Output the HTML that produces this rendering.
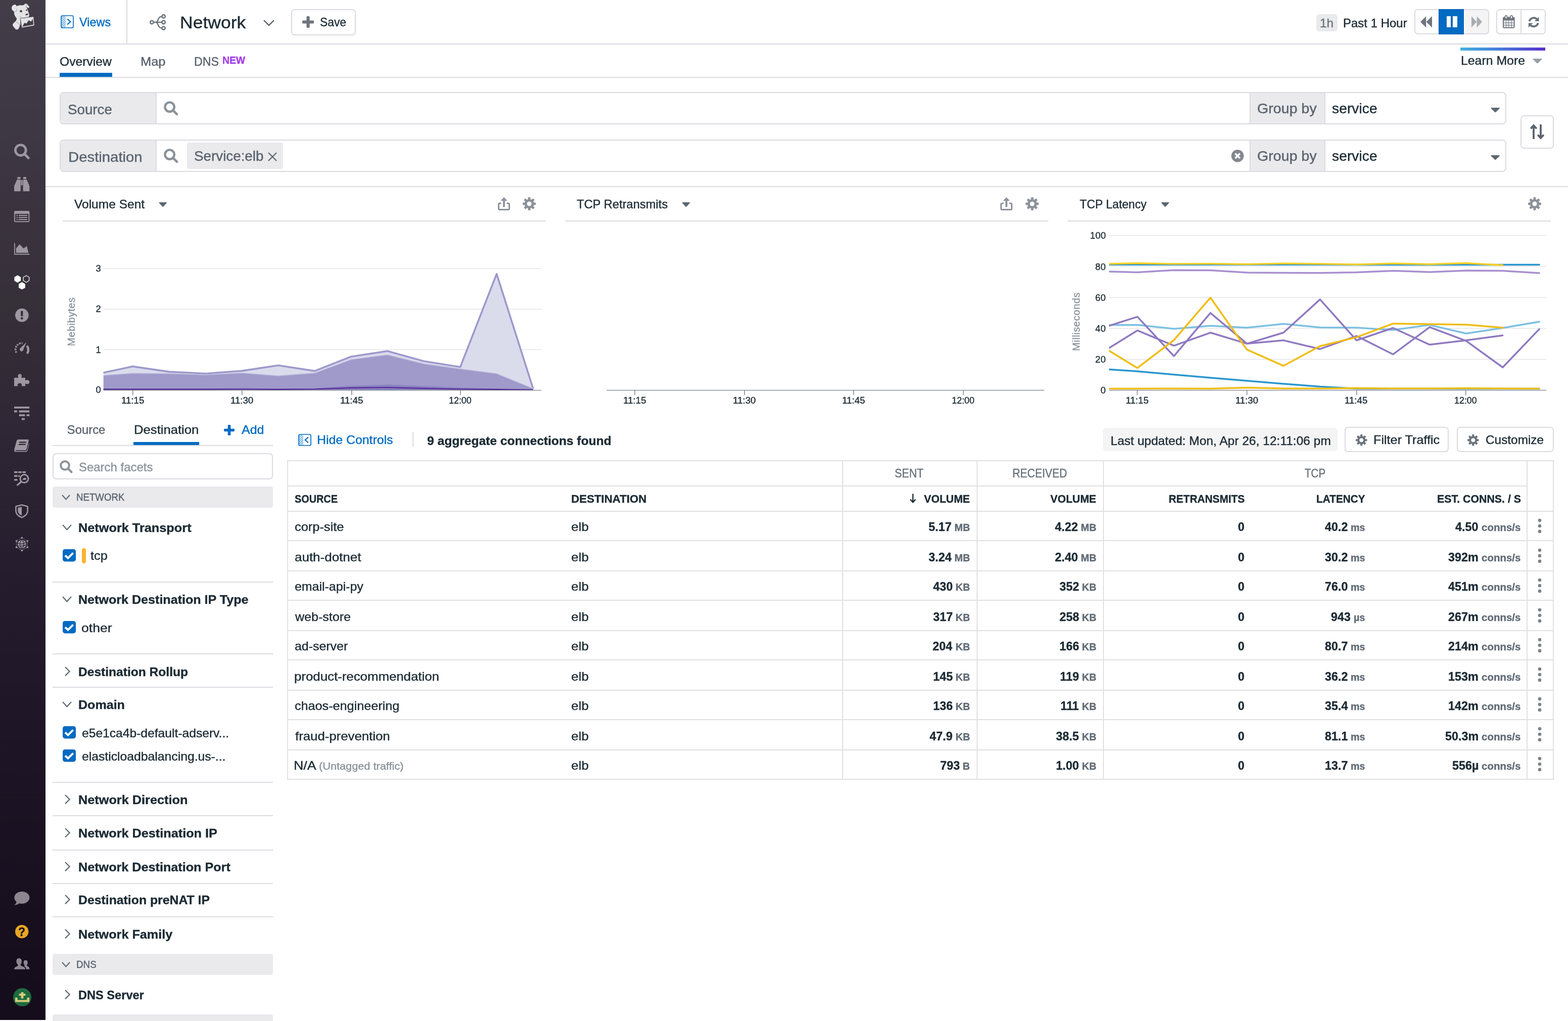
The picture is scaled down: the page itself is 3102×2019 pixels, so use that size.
<!DOCTYPE html>
<html lang="en"><head><meta charset="utf-8"><title>Network | Datadog</title>
<style>
*{box-sizing:border-box;margin:0;padding:0}
html,body{width:3102px;height:2019px;overflow:hidden;background:#fff}
body{position:relative;will-change:transform;font-family:"Liberation Sans",sans-serif;color:#1c2b34;font-size:23.8px;line-height:1;-webkit-font-smoothing:antialiased}
.t{position:absolute;white-space:nowrap;line-height:1;display:block;transform-origin:0 0;-webkit-text-stroke:0.4px currentColor}
.abs{position:absolute}
svg{display:block;overflow:visible}
</style></head>
<body>
<nav aria-label="Main navigation">
<div style="position:absolute;left:0px;top:0px;width:90px;height:2017.4px;background:linear-gradient(180deg,#433d49 0px,#3d3643 300px,#363039 600px,#2d2534 900px,#251d2d 1150px,#1d1525 1500px,#160e1d 1900px,#150c1c 2019px)"></div>
<svg style="position:absolute;left:0px;top:0px;" width="90" height="66" viewBox="0 0 2112 1549"><path fill="#e3e3e5" d="M540 390 C530 300 600 215 690 212 C740 215 760 260 775 290 C830 260 900 235 960 240 C1010 250 1060 245 1110 235 C1140 190 1180 160 1215 165 C1280 200 1340 280 1360 345 C1340 375 1310 370 1280 350 L1235 330 C1270 420 1300 520 1330 600 C1360 650 1370 720 1340 770 C1320 800 1280 810 1250 815 C1200 850 1150 870 1100 870 L960 850 L940 850 L950 1170 L915 1175 C910 1260 880 1340 800 1375 C740 1380 700 1340 670 1290 C620 1240 580 1200 590 1140 C600 1090 660 1040 720 990 C760 950 780 900 770 840 C700 770 660 690 655 600 C650 570 655 560 660 545 C590 510 545 450 540 390Z"/><path fill="#e3e3e5" stroke="#423c48" stroke-width="14" stroke-linejoin="miter" d="M945 852 L1558 772 L1596 1188 L1012 1288Z"/><path fill="#423c48" d="M1040 1236 L1132 1060 L1228 1094 L1332 940 L1442 1004 L1520 872 L1552 1142Z"/><ellipse cx="975" cy="520" rx="56" ry="52" fill="#423c48"/><ellipse cx="1225" cy="468" rx="30" ry="42" fill="#423c48" transform="rotate(-12 1225 468)"/><ellipse cx="1246" cy="670" rx="68" ry="38" fill="#423c48" transform="rotate(-14 1246 670)"/><path d="M920 758 C1000 840 1150 885 1262 768" fill="none" stroke="#423c48" stroke-width="13"/><path d="M690 548 C745 545 785 500 775 420" fill="none" stroke="#423c48" stroke-width="11"/><path d="M745 1040 C830 1030 890 1100 915 1175" fill="none" stroke="#423c48" stroke-width="11"/><path d="M1205 195 L1240 330 M1170 305 L1240 345" fill="none" stroke="#423c48" stroke-width="9"/></svg>
<svg style="position:absolute;left:27.8px;top:283.6px;" width="30.4" height="30.4" viewBox="0 0 30.4 30.4"><circle cx="12.8" cy="13" r="10.4" fill="none" stroke="#9c97a1" stroke-width="4.8"/><path d="M20.4 20.6 L28.2 28.2" stroke="#9c97a1" stroke-width="5" stroke-linecap="round"/></svg>
<svg style="position:absolute;left:27.8px;top:349.5px;" width="30.4" height="28.4" viewBox="0 0 30.4 28.4"><path fill="#9c97a1" d="M6.4 0 H12.4 V4 H6.4Z M18 0 H24 V4 H18Z M5.6 5.2 H12.8 V28.2 H0 V20 Q0 18 0.6 16.4Z M17.6 5.2 H24.8 L29.8 16.4 Q30.4 18 30.4 20 V28.2 H17.6Z M13.6 6 H16.8 V16.4 H13.6Z"/></svg>
<svg style="position:absolute;left:27.8px;top:416.8px;" width="30.4" height="22.4" viewBox="0 0 30.4 22.4"><path fill="#9c97a1" fill-rule="evenodd" d="M2.4 0 H28 Q30.4 0 30.4 2.4 V19.8 Q30.4 22.2 28 22.2 H2.4 Q0 22.2 0 19.8 V2.4 Q0 0 2.4 0Z M2 6 V20.2 H28.4 V6Z M4.6 8 H7 V10 H4.6Z M8.8 8 H26 V10 H8.8Z M4.6 12 H7 V14 H4.6Z M8.8 12 H26 V14 H8.8Z M4.6 16 H7 V18 H4.6Z M8.8 16 H26 V18 H8.8Z"/></svg>
<svg style="position:absolute;left:27.8px;top:481.2px;" width="30.4" height="23" viewBox="0 0 30.4 23"><path fill="#9c97a1" d="M0 0 H1.8 V20.8 H30.4 V22.8 H0Z M3.8 10.2 L10.8 2 L18.6 10.2 L25 5.4 L28.4 19 H3.8Z"/></svg>
<svg style="position:absolute;left:27.8px;top:543.6px;" width="30.4" height="29" viewBox="0 0 30.4 29"><polygon points="6.80,0.20 13.21,3.90 13.21,11.30 6.80,15.00 0.39,11.30 0.39,3.90" fill="#fff"/><polygon points="23.90,1.00 29.62,4.30 29.62,10.90 23.90,14.20 18.18,10.90 18.18,4.30" fill="none" stroke="#fff" stroke-width="1.3"/><polygon points="15.40,13.80 21.81,17.50 21.81,24.90 15.40,28.60 8.99,24.90 8.99,17.50" fill="#fff"/></svg>
<svg style="position:absolute;left:29.8px;top:609.6px;" width="26.6" height="26.6" viewBox="0 0 26.6 26.6"><circle cx="13.3" cy="13.3" r="13.3" fill="#9c97a1"/><path d="M11.2 5 H15.4 V15.2 H11.2Z M11.2 17.6 H15.4 V21.6 H11.2Z" fill="#342d3a"/></svg>
<svg style="position:absolute;left:27.8px;top:676px;" width="30.4" height="23.6" viewBox="0 0 30.4 23.6"><path d="M4.4 21.4 A12.6 12.6 0 0 1 16.6 2.6" fill="none" stroke="#9c97a1" stroke-width="3.4" stroke-dasharray="3.2 1.9"/><path d="M26.2 9.4 A13 13 0 0 1 26.6 21.6" fill="none" stroke="#9c97a1" stroke-width="4.6" stroke-linecap="round"/><path d="M24.4 0.6 L18.2 15 A3.6 3.6 0 1 1 13 11.8Z" fill="#9c97a1"/></svg>
<svg style="position:absolute;left:27.8px;top:739.4px;" width="30.4" height="24.6" viewBox="0 0 30.4 24.6"><path fill="#9c97a1" d="M0 8 H8.6 C7 6 6.6 0.4 11.2 0.4 C15.8 0.4 15.4 6 13.8 8 H22 V13.6 C24 12 30.2 11.6 30.2 16.4 C30.2 21.2 24 20.8 22 19.2 V24.4 H14.6 C15.8 22.6 15.6 18.8 11 18.8 C6.4 18.8 6.2 22.6 7.4 24.4 H0Z"/></svg>
<svg style="position:absolute;left:27.8px;top:803.6px;" width="30.4" height="26.8" viewBox="0 0 30.4 26.8"><path fill="#9c97a1" d="M0 0 H30.2 V3.8 H0Z M0 7.6 H5.8 V11.4 H0Z M9.6 7.6 H30.2 V11.4 H9.6Z M9.6 15.2 H21.4 V19 H9.6Z M24.6 15.2 H30.2 V19 H24.6Z M15 22.8 H21 V26.6 H15Z"/></svg>
<svg style="position:absolute;left:27.8px;top:869.4px;" width="30.4" height="24.8" viewBox="0 0 30.4 24.8"><path fill="#9c97a1" fill-rule="evenodd" d="M8.6 0 H26.4 Q29.4 0 28.6 3 L24.6 19 Q24 21.2 21.6 21.2 H4 Q2.4 21.2 2.4 22 Q2.4 22.8 4 22.8 H22.6 Q25 22.8 25.8 20.4 L29.2 7 Q30 8 29.6 9.6 L26.4 22 Q25.8 24.6 23 24.6 H3.4 Q0 24.6 0.2 21.2 Q0.2 20 0.6 18.6 L4.8 3 Q5.6 0 8.6 0Z M10.4 4.6 L9.8 6.8 H23.4 L24 4.6Z M9.2 8.8 L8.6 11 H22.2 L22.8 8.8Z"/></svg>
<svg style="position:absolute;left:27.8px;top:931.6px;" width="30.4" height="28" viewBox="0 0 30.4 28"><path fill="#9c97a1" d="M0 0 H6.6 V3.4 H0Z M8.2 0 H14.8 V3.4 H8.2Z M16.4 0 H23 V3.4 H16.4Z M0 7.6 H6.6 V11 H0Z M8.2 7.6 H11 V11 H8.2Z M0 15.2 H6.6 V18.6 H0Z"/><circle cx="20" cy="14.6" r="8" fill="none" stroke="#9c97a1" stroke-width="3"/><path d="M14 20.6 L6.6 27" stroke="#9c97a1" stroke-width="3.4" stroke-linecap="round"/><path d="M16.4 17 L19 13 H23.6 V17Z" fill="#9c97a1"/></svg>
<svg style="position:absolute;left:30px;top:997px;" width="26" height="27.6" viewBox="0 0 26 27.6"><path d="M13 1.4 L24.6 4.6 V13 C24.6 19.4 19.6 23.6 13 26.2 C6.4 23.6 1.4 19.4 1.4 13 V4.6Z" fill="none" stroke="#9c97a1" stroke-width="2.6" stroke-linejoin="round"/><path d="M13 5.2 V22.6 C8.6 20.6 5.2 17.4 5.2 12.8 V7.2Z" fill="#9c97a1"/></svg>
<svg style="position:absolute;left:29.6px;top:1061.8px;" width="26.8" height="28" viewBox="0 0 26.8 28"><circle cx="13.4" cy="14" r="8.6" fill="#9c97a1"/><path d="M13.4 5.4 C8.4 9.4 8.4 18.6 13.4 22.6 M13.4 5.4 C18.4 9.4 18.4 18.6 13.4 22.6 M5 12.4 C10 14.6 17 13.4 21.8 10.8 M5.6 17 C10.4 18.6 17 17.6 21.6 15.4" fill="none" stroke="#2a2231" stroke-width="1.2"/><polygon points="13.4,1.6 24.2,7.8 24.2,20.2 13.4,26.4 2.6,20.2 2.6,7.8" fill="none" stroke="#9c97a1" stroke-width="1" stroke-dasharray="2 1.4"/><circle cx="13.4" cy="1.6" r="1.9" fill="#9c97a1"/><circle cx="24.2" cy="7.8" r="1.9" fill="#9c97a1"/><circle cx="24.2" cy="20.2" r="1.9" fill="#9c97a1"/><circle cx="13.4" cy="26.4" r="1.9" fill="#9c97a1"/><circle cx="2.6" cy="20.2" r="1.9" fill="#9c97a1"/><circle cx="2.6" cy="7.8" r="1.9" fill="#9c97a1"/></svg>
<svg style="position:absolute;left:27.8px;top:1763.4px;" width="30.4" height="27" viewBox="0 0 30.4 27"><ellipse cx="15.4" cy="12" rx="15" ry="12" fill="#8b8690"/><path d="M5 19 C4.4 23 2.6 25.4 0.2 26.8 C4.6 26.8 8.6 25.2 11 22.6Z" fill="#8b8690"/></svg>
<svg style="position:absolute;left:29.8px;top:1828.8px;" width="26.4" height="26.4" viewBox="0 0 26.4 26.4"><circle cx="13.2" cy="13.2" r="13.2" fill="#e9a723"/></svg>
<span class="t" style="left:36.11px;top:1832px;font-size:23px;font-weight:700;color:#1a1220;">?</span>
<svg style="position:absolute;left:27.8px;top:1895px;" width="30.4" height="22" viewBox="0 0 30.4 22"><path fill="#8b8690" d="M9.6 0 C13.2 0 15 2.6 15 6 C15 9 13.8 11 12.6 12.2 C12.4 14 14 15 16.6 16 C20 17.2 22 18.6 22.4 21.8 H0 C0.4 18.6 2 17.2 5 16.2 C7.2 15.4 7.8 14.2 7.4 12.4 C5.6 11 4.4 9 4.4 6 C4.4 2.6 6 0 9.6 0Z M22.6 3.8 C25.4 3.8 26.8 5.8 26.8 8.4 C26.8 10.6 26 12.2 25 13.2 C24.8 14.6 25.8 15.4 27.4 16 C29.4 16.8 30.2 18.6 30.4 21.8 H24.2 C23.8 18.8 22.2 17 19.6 15.8 C20.6 15.2 21 14.4 20.6 13.2 C19.4 12.2 18.6 10.6 18.6 8.4 C18.6 5.8 19.8 3.8 22.6 3.8Z"/></svg>
<svg style="position:absolute;left:25.8px;top:1953.8px;" width="36" height="36" viewBox="0 0 36 36"><circle cx="18" cy="18" r="18" fill="#1d6b3f"/><path fill="#d4cd7c" d="M15.6 8 H20.4 V11 H24.4 V15 H20.4 V20.4 H15.6 V15 H11.6 V11 H15.6Z M4 18.8 H8.6 V23.4 H27.4 V18.8 H32 V27.6 H4Z"/></svg>
</nav>
<header aria-label="Network toolbar and filters">
<div style="position:absolute;left:90px;top:86px;width:3012px;height:2px;background:#dadbe0"></div>
<div style="position:absolute;left:90px;top:152px;width:3012px;height:2px;background:#dadbe0"></div>
<div style="position:absolute;left:250px;top:0px;width:2px;height:86px;background:#dadbe0"></div>
<svg style="position:absolute;left:120px;top:30px;" width="26" height="26" viewBox="0 0 26 26"><defs><pattern id="hatch" width="3" height="3" patternUnits="userSpaceOnUse" patternTransform="rotate(-45)"><rect width="3" height="1.3" fill="#006bc2"/></pattern></defs><rect x="1" y="1" width="24" height="24" rx="2.6" fill="#fff" stroke="#006bc2" stroke-width="1.7"/><rect x="2" y="2" width="8" height="22" fill="url(#hatch)" opacity="0.75"/><path d="M13.2 7.6 L19.4 13 L13.2 18.4" fill="none" stroke="#006bc2" stroke-width="2.1"/></svg>
<span class="t" style="left:157.02px;top:32px;font-size:23.8px;transform:scaleX(0.9876);color:#006bc2;">Views</span>
<svg style="position:absolute;left:296px;top:28px;" width="32" height="32" viewBox="0 0 32 32"><g fill="none" stroke="#6c747d" stroke-width="2.5"><circle cx="4.4" cy="16" r="3.2"/><circle cx="27.6" cy="4.4" r="3.2"/><circle cx="27.6" cy="16" r="3.2"/><circle cx="27.6" cy="27.6" r="3.2"/><path d="M7.6 16 H24.4"/><path d="M12.5 16 C17.5 16 15.5 4.4 24.4 4.4"/><path d="M12.5 16 C17.5 16 15.5 27.6 24.4 27.6"/></g></svg>
<span class="t" style="left:356.11px;top:29px;font-size:32.8px;transform:scaleX(1.0834);color:#1c2b34;">Network</span>
<svg style="position:absolute;left:521px;top:39px;" width="22" height="13" viewBox="0 0 22 13"><path d="M1 1.2 L11 11 L21 1.2" fill="none" stroke="#5d6770" stroke-width="2.5"/></svg>
<div style="position:absolute;left:576px;top:18px;width:128px;height:52px;border:2px solid #dadbe0;border-radius:7px;background:#fff"></div>
<svg style="position:absolute;left:597.6px;top:31.6px;" width="23" height="23" viewBox="0 0 23 23"><rect x="0" y="8.4" width="23" height="6.2" rx="1.8" fill="#6c747d"/><rect x="8.4" y="0" width="6.2" height="23" rx="1.8" fill="#6c747d"/></svg>
<span class="t" style="left:632.92px;top:32px;font-size:23.8px;transform:scaleX(0.9582);color:#1c2b34;">Save</span>
<div style="position:absolute;left:2604px;top:28px;width:42px;height:34px;background:#eaeaed;border-radius:6px"></div>
<span class="t" style="left:2611.31px;top:34px;font-size:23.8px;transform:scaleX(1.0283);color:#6a737c;">1h</span>
<span class="t" style="left:2656.58px;top:34px;font-size:23.8px;transform:scaleX(1.0082);color:#1c2b34;">Past 1 Hour</span>
<div style="position:absolute;left:2798px;top:18px;width:148px;height:50px;border:2px solid #dadbe0;border-radius:7px;background:linear-gradient(90deg,#fff 0,#fff 98px,#f4f4f5 98px)"></div>
<div style="position:absolute;left:2846px;top:18px;width:50px;height:50px;background:#006bc2;border:1px solid #0058b8"></div>
<svg style="position:absolute;left:2810px;top:31.8px;" width="23" height="22.6" viewBox="0 0 23 22.6"><path d="M11.3 0 V22.6 L0 11.3Z M23 0 V22.6 L11.7 11.3Z" fill="#6e757e"/></svg>
<div style="position:absolute;left:2861.5px;top:31.8px;width:8.2px;height:22.6px;background:#fff"></div>
<div style="position:absolute;left:2874.4px;top:31.8px;width:8.2px;height:22.6px;background:#fff"></div>
<svg style="position:absolute;left:2911px;top:31.8px;" width="21" height="22.6" viewBox="0 0 21 22.6"><path d="M0 0 L10.3 11.3 L0 22.6Z M10.7 0 L21 11.3 L10.7 22.6Z" fill="#a9adb3"/></svg>
<div style="position:absolute;left:2960px;top:18px;width:98px;height:50px;border:2px solid #dadbe0;border-radius:7px;background:#fff"></div>
<div style="position:absolute;left:3008px;top:20px;width:2px;height:46px;background:#dadbe0"></div>
<svg style="position:absolute;left:2973.4px;top:30.2px;" width="23.6" height="25.8" viewBox="0 0 23.6 25.8"><rect x="1" y="4.6" width="21.6" height="20.2" rx="1.8" fill="#fff" stroke="#6c747d" stroke-width="2"/><rect x="0.4" y="4" width="22.8" height="6.4" rx="1.6" fill="#6c747d"/><path d="M1.5 15.2 H22 M1.5 19.9 H22 M6.5 10.4 V24.4 M11.8 10.4 V24.4 M17.1 10.4 V24.4" stroke="#6c747d" stroke-width="1.15" fill="none"/><rect x="4.5" y="0.9" width="4" height="6.4" rx="2" fill="#fff" stroke="#6c747d" stroke-width="1.7"/><rect x="15.1" y="0.9" width="4" height="6.4" rx="2" fill="#fff" stroke="#6c747d" stroke-width="1.7"/></svg>
<svg style="position:absolute;left:3022.5px;top:31.5px;" width="22.4" height="23.6" viewBox="0 0 22.4 23.6"><g fill="none" stroke="#6c747d" stroke-width="4"><path d="M2.6 10.2 A8.9 8.9 0 0 1 18 6.4"/><path d="M19.8 13.4 A8.9 8.9 0 0 1 4.4 17.2"/></g><path d="M21.6 1.2 V10 H12.8Z" fill="#6c747d"/><path d="M0.8 22.4 V13.6 H9.6Z" fill="#6c747d"/></svg>
<span class="t" style="left:118.20px;top:110px;font-size:23.8px;transform:scaleX(1.0353);color:#1c2b34;">Overview</span>
<div style="position:absolute;left:118px;top:144px;width:104px;height:8px;background:#006bc2"></div>
<span class="t" style="left:277.56px;top:110px;font-size:23.8px;transform:scaleX(1.0695);color:#5a636d;">Map</span>
<span class="t" style="left:383.75px;top:110px;font-size:23.8px;transform:scaleX(0.9749);color:#5a636d;">DNS</span>
<span class="t" style="left:439.92px;top:110px;font-size:19.4px;font-weight:700;color:#a63ee8;">NEW</span>
<div style="position:absolute;left:2889px;top:94px;width:168px;height:6px;background:linear-gradient(90deg,#3fb3de,#4a6fd8 55%,#5a2fcf)"></div>
<span class="t" style="left:2890.21px;top:108px;font-size:23.8px;transform:scaleX(1.0436);color:#1c2b34;">Learn More</span>
<svg style="position:absolute;left:3031.5px;top:116.4px;" width="19" height="9.6" viewBox="0 0 19 9.6"><path d="M1.2 0 H17.8 Q19 0 18.2 1.4 L10.5 9 Q9.5 9.6 8.5 9 L0.8 1.4 Q0 0 1.2 0Z" fill="#9a9fa6"/></svg>
<div style="position:absolute;left:118px;top:182px;width:2862px;height:64px;border:2px solid #dadbe0;border-radius:8px;background:#fff;overflow:hidden"><div class="abs" style="left:0;top:0;width:190px;height:60px;background:#eaeaed;border-right:2px solid #dadbe0"></div><div class="abs" style="left:2352px;top:0;width:150px;height:60px;background:#eaeaed;border-left:2px solid #dadbe0;border-right:2px solid #dadbe0"></div></div>
<svg style="position:absolute;left:324px;top:200px;" width="28.4" height="28.4" viewBox="0 0 28.4 28.4"><circle cx="11.6" cy="11.6" r="9.2" fill="none" stroke="#8a9199" stroke-width="4.4"/><path d="M18.4 18.4 L26 26" stroke="#8a9199" stroke-width="4.6" stroke-linecap="round"/></svg>
<span class="t" style="left:2486.82px;top:201px;font-size:27.4px;transform:scaleX(1.0454);color:#5a636d;">Group by</span>
<span class="t" style="left:2634.91px;top:201px;font-size:27.4px;transform:scaleX(1.0330);color:#1c2b34;">service</span>
<svg style="position:absolute;left:2949px;top:212.6px;" width="18.4" height="9.4" viewBox="0 0 18.4 9.4"><path d="M1.2 0 H17.2 Q18.4 0 17.6 1.4 L10.2 8.8 Q9.2 9.4 8.2 8.8 L0.8 1.4 Q0 0 1.2 0Z" fill="#5d6770"/></svg>
<div style="position:absolute;left:118px;top:276px;width:2862px;height:64px;border:2px solid #dadbe0;border-radius:8px;background:#fff;overflow:hidden"><div class="abs" style="left:0;top:0;width:190px;height:60px;background:#eaeaed;border-right:2px solid #dadbe0"></div><div class="abs" style="left:2352px;top:0;width:150px;height:60px;background:#eaeaed;border-left:2px solid #dadbe0;border-right:2px solid #dadbe0"></div></div>
<svg style="position:absolute;left:324px;top:294px;" width="28.4" height="28.4" viewBox="0 0 28.4 28.4"><circle cx="11.6" cy="11.6" r="9.2" fill="none" stroke="#8a9199" stroke-width="4.4"/><path d="M18.4 18.4 L26 26" stroke="#8a9199" stroke-width="4.6" stroke-linecap="round"/></svg>
<span class="t" style="left:2486.82px;top:295px;font-size:27.4px;transform:scaleX(1.0454);color:#5a636d;">Group by</span>
<span class="t" style="left:2634.91px;top:295px;font-size:27.4px;transform:scaleX(1.0330);color:#1c2b34;">service</span>
<svg style="position:absolute;left:2949px;top:306.6px;" width="18.4" height="9.4" viewBox="0 0 18.4 9.4"><path d="M1.2 0 H17.2 Q18.4 0 17.6 1.4 L10.2 8.8 Q9.2 9.4 8.2 8.8 L0.8 1.4 Q0 0 1.2 0Z" fill="#5d6770"/></svg>
<span class="t" style="left:134.48px;top:203px;font-size:27.4px;transform:scaleX(1.0123);color:#5a636d;">Source</span>
<span class="t" style="left:134.69px;top:297px;font-size:27.4px;transform:scaleX(1.0703);color:#5a636d;">Destination</span>
<div style="position:absolute;left:370px;top:282.4px;width:190px;height:51.2px;background:#eaeaed;border-radius:4px"></div>
<span class="t" style="left:383.88px;top:295px;font-size:27.4px;transform:scaleX(1.0144);color:#5a636d;">Service:elb</span>
<svg style="position:absolute;left:530px;top:300.6px;" width="18" height="18" viewBox="0 0 18 18"><path d="M1 1 L17 17 M17 1 L1 17" stroke="#5a636d" stroke-width="2.2" fill="none"/></svg>
<svg style="position:absolute;left:2435.6px;top:296px;" width="24.6" height="24.6" viewBox="0 0 24.6 24.6"><circle cx="12.3" cy="12.3" r="12.3" fill="#82888f"/><path d="M7.6 7.6 L17 17 M17 7.6 L7.6 17" stroke="#fff" stroke-width="3.6" fill="none"/></svg>
<div style="position:absolute;left:3008px;top:228px;width:66px;height:66px;border:2px solid #dadbe0;border-radius:7px;background:#fff"></div>
<svg style="position:absolute;left:3027px;top:245px;" width="28" height="31" viewBox="0 0 28 31"><g fill="none" stroke="#5a636d" stroke-width="3.8"><path d="M7 30 V3 M1.2 9.4 L7 3 L12.8 9.4"/><path d="M21 1 V28 M15.2 21.6 L21 28 L26.8 21.6"/></g></svg>
<div style="position:absolute;left:90px;top:368px;width:3012px;height:2px;background:#dadbe0"></div>
</header>
<section aria-label="Summary graphs">
<div style="position:absolute;left:124px;top:436px;width:956px;height:2px;background:#dadbe0"></div>
<div style="position:absolute;left:1118px;top:436px;width:956px;height:2px;background:#dadbe0"></div>
<div style="position:absolute;left:2112px;top:436px;width:956px;height:2px;background:#dadbe0"></div>
<span class="t" style="left:146.72px;top:392px;font-size:23.8px;transform:scaleX(1.0309);color:#1c2b34;">Volume Sent</span>
<svg style="position:absolute;left:314px;top:400px;" width="16.4" height="9" viewBox="0 0 16.4 9"><path d="M1.2 0 H15.2 Q16.4 0 15.6 1.4 L9.2 8.4 Q8.2 9 7.2 8.4 L0.8 1.4 Q0 0 1.2 0Z" fill="#5d6770"/></svg>
<span class="t" style="left:1141.46px;top:392px;font-size:23.8px;transform:scaleX(0.9963);color:#1c2b34;">TCP Retransmits</span>
<svg style="position:absolute;left:1348.7px;top:400px;" width="16.4" height="9" viewBox="0 0 16.4 9"><path d="M1.2 0 H15.2 Q16.4 0 15.6 1.4 L9.2 8.4 Q8.2 9 7.2 8.4 L0.8 1.4 Q0 0 1.2 0Z" fill="#5d6770"/></svg>
<span class="t" style="left:2135.86px;top:392px;font-size:23.8px;transform:scaleX(0.9647);color:#1c2b34;">TCP Latency</span>
<svg style="position:absolute;left:2296.8px;top:400px;" width="16.4" height="9" viewBox="0 0 16.4 9"><path d="M1.2 0 H15.2 Q16.4 0 15.6 1.4 L9.2 8.4 Q8.2 9 7.2 8.4 L0.8 1.4 Q0 0 1.2 0Z" fill="#5d6770"/></svg>
<svg style="position:absolute;left:985px;top:389.9px;" width="24" height="26" viewBox="0 0 24 26"><path d="M6.6 11.9 H3.6 Q1.5 11.9 1.5 14 V22.4 Q1.5 24.5 3.6 24.5 H20.4 Q22.5 24.5 22.5 22.4 V14 Q22.5 11.9 20.4 11.9 H17.4" fill="none" stroke="#8c929a" stroke-width="3"/><path d="M12 0 L18.6 7 H13.9 V18.6 Q13.9 19.7 12 19.7 Q10.1 19.7 10.1 18.6 V7 H5.4Z" fill="#8c929a"/></svg>
<svg style="position:absolute;left:1033.9px;top:389.9px;" width="26" height="26" viewBox="0 0 26 26"><g transform="translate(13 13)" fill="#8c929a"><circle r="9.3"/><rect x="-2.4" y="-12.9" width="4.8" height="7" rx="0.9" transform="rotate(0)"/><rect x="-2.4" y="-12.9" width="4.8" height="7" rx="0.9" transform="rotate(45)"/><rect x="-2.4" y="-12.9" width="4.8" height="7" rx="0.9" transform="rotate(90)"/><rect x="-2.4" y="-12.9" width="4.8" height="7" rx="0.9" transform="rotate(135)"/><rect x="-2.4" y="-12.9" width="4.8" height="7" rx="0.9" transform="rotate(180)"/><rect x="-2.4" y="-12.9" width="4.8" height="7" rx="0.9" transform="rotate(225)"/><rect x="-2.4" y="-12.9" width="4.8" height="7" rx="0.9" transform="rotate(270)"/><rect x="-2.4" y="-12.9" width="4.8" height="7" rx="0.9" transform="rotate(315)"/><circle r="4.5" fill="#fff"/></g></svg>
<svg style="position:absolute;left:1979px;top:389.9px;" width="24" height="26" viewBox="0 0 24 26"><path d="M6.6 11.9 H3.6 Q1.5 11.9 1.5 14 V22.4 Q1.5 24.5 3.6 24.5 H20.4 Q22.5 24.5 22.5 22.4 V14 Q22.5 11.9 20.4 11.9 H17.4" fill="none" stroke="#8c929a" stroke-width="3"/><path d="M12 0 L18.6 7 H13.9 V18.6 Q13.9 19.7 12 19.7 Q10.1 19.7 10.1 18.6 V7 H5.4Z" fill="#8c929a"/></svg>
<svg style="position:absolute;left:2029.1px;top:389.9px;" width="26" height="26" viewBox="0 0 26 26"><g transform="translate(13 13)" fill="#8c929a"><circle r="9.3"/><rect x="-2.4" y="-12.9" width="4.8" height="7" rx="0.9" transform="rotate(0)"/><rect x="-2.4" y="-12.9" width="4.8" height="7" rx="0.9" transform="rotate(45)"/><rect x="-2.4" y="-12.9" width="4.8" height="7" rx="0.9" transform="rotate(90)"/><rect x="-2.4" y="-12.9" width="4.8" height="7" rx="0.9" transform="rotate(135)"/><rect x="-2.4" y="-12.9" width="4.8" height="7" rx="0.9" transform="rotate(180)"/><rect x="-2.4" y="-12.9" width="4.8" height="7" rx="0.9" transform="rotate(225)"/><rect x="-2.4" y="-12.9" width="4.8" height="7" rx="0.9" transform="rotate(270)"/><rect x="-2.4" y="-12.9" width="4.8" height="7" rx="0.9" transform="rotate(315)"/><circle r="4.5" fill="#fff"/></g></svg>
<svg style="position:absolute;left:3023px;top:390.4px;" width="26" height="26" viewBox="0 0 26 26"><g transform="translate(13 13)" fill="#8c929a"><circle r="9.3"/><rect x="-2.4" y="-12.9" width="4.8" height="7" rx="0.9" transform="rotate(0)"/><rect x="-2.4" y="-12.9" width="4.8" height="7" rx="0.9" transform="rotate(45)"/><rect x="-2.4" y="-12.9" width="4.8" height="7" rx="0.9" transform="rotate(90)"/><rect x="-2.4" y="-12.9" width="4.8" height="7" rx="0.9" transform="rotate(135)"/><rect x="-2.4" y="-12.9" width="4.8" height="7" rx="0.9" transform="rotate(180)"/><rect x="-2.4" y="-12.9" width="4.8" height="7" rx="0.9" transform="rotate(225)"/><rect x="-2.4" y="-12.9" width="4.8" height="7" rx="0.9" transform="rotate(270)"/><rect x="-2.4" y="-12.9" width="4.8" height="7" rx="0.9" transform="rotate(315)"/><circle r="4.5" fill="#fff"/></g></svg>
<svg style="position:absolute;left:0px;top:440px;" width="1100" height="380" viewBox="0 440 1100 380"><rect x="204.5" y="530.8" width="866.5" height="1.2" fill="#dedfe3"/><rect x="204.5" y="610.8" width="866.5" height="1.2" fill="#dedfe3"/><rect x="204.5" y="691.0" width="866.5" height="1.2" fill="#dedfe3"/><clipPath id="c1"><rect x="204.5" y="500" width="867" height="272"/></clipPath><g clip-path="url(#c1)"><path d="M204.5 737.0 L262.5 724.6 L334.5 735.1 L406.5 738.7 L478.5 733.4 L550.5 722.5 L622.5 733.6 L694.5 705.3 L766.5 694.3 L838.5 714.3 L910.5 725.8 L982.5 541.6 L1054.5 767.9 L1054.5 771 L204.5 771Z" fill="#dadcec"/><polyline points="204.5,737.0 262.5,724.6 334.5,735.1 406.5,738.7 478.5,733.4 550.5,722.5 622.5,733.6 694.5,705.3 766.5,694.3 838.5,714.3 910.5,725.8 982.5,541.6 1054.5,767.9" fill="none" stroke="#9e99cc" stroke-width="3.6" stroke-linejoin="round" stroke-linecap="round"/><path d="M204.5 742.5 L262.5 738.3 L334.5 738.9 L406.5 741.4 L478.5 737.6 L550.5 743.3 L622.5 737.8 L694.5 711.1 L766.5 701.7 L838.5 719.5 L910.5 729.6 L982.5 738.9 L1054.5 768.4 L1054.5 771 L204.5 771Z" fill="#9f9aca"/><polyline points="204.5,742.5 262.5,738.3 334.5,738.9 406.5,741.4 478.5,737.6 550.5,743.3 622.5,737.8 694.5,711.1 766.5,701.7 838.5,719.5 910.5,729.6 982.5,738.9 1054.5,768.4" fill="none" stroke="#bcb8dc" stroke-width="1.4" stroke-linejoin="round" stroke-linecap="round"/><path d="M204.5 768.6 L262.5 768.4 L334.5 768.4 L406.5 768.4 L478.5 768.0 L550.5 768.4 L622.5 768.0 L694.5 762.8 L766.5 760.6 L838.5 763.2 L910.5 766.6 L982.5 768.4 L1054.5 770.5 L1054.5 771 L204.5 771Z" fill="#8a82c2"/><polyline points="204.5,769.8 262.5,769.8 334.5,769.8 406.5,769.8 478.5,769.4 550.5,770.0 622.5,769.4 694.5,767.0 766.5,766.2 838.5,768.0 910.5,769.4 982.5,770.0 1054.5,770.8" fill="none" stroke="#4f2093" stroke-width="1.9"/></g><rect x="204.5" y="771" width="866.5" height="1.3" fill="#80868e"/></svg>
<span class="t" style="left:189.50px;top:522px;font-size:18.4px;color:#1c2b34;">3</span>
<span class="t" style="left:189.51px;top:602px;font-size:18.4px;color:#1c2b34;">2</span>
<span class="t" style="left:189.50px;top:683px;font-size:18.4px;color:#1c2b34;">1</span>
<span class="t" style="left:189.46px;top:762px;font-size:18.4px;color:#1c2b34;">0</span>
<svg style="position:absolute;left:261.7px;top:771px;" width="2" height="10.4" viewBox="0 0 2 10.4"><rect width="1.5" height="10.4" fill="#80868e"/></svg>
<span class="t" style="left:239.68px;top:783px;font-size:18.4px;transform:scaleX(1.0130);color:#1c2b34;">11:15</span>
<svg style="position:absolute;left:477.6px;top:771px;" width="2" height="10.4" viewBox="0 0 2 10.4"><rect width="1.5" height="10.4" fill="#80868e"/></svg>
<span class="t" style="left:455.58px;top:783px;font-size:18.4px;transform:scaleX(1.0118);color:#1c2b34;">11:30</span>
<svg style="position:absolute;left:694.6px;top:771px;" width="2" height="10.4" viewBox="0 0 2 10.4"><rect width="1.5" height="10.4" fill="#80868e"/></svg>
<span class="t" style="left:672.58px;top:783px;font-size:18.4px;transform:scaleX(1.0130);color:#1c2b34;">11:45</span>
<svg style="position:absolute;left:910.4px;top:771px;" width="2" height="10.4" viewBox="0 0 2 10.4"><rect width="1.5" height="10.4" fill="#80868e"/></svg>
<span class="t" style="left:888.42px;top:783px;font-size:18.4px;transform:scaleX(0.9717);color:#1c2b34;">12:00</span>
<span class="t" style="left:141px;top:635.5px;font-size:20.2px;color:#8b939b;letter-spacing:0.55px;transform-origin:50% 50%;transform:translate(-50%,-50%) rotate(-90deg)">Mebibytes</span>
<svg style="position:absolute;left:1200px;top:771px;" width="866" height="2" viewBox="0 0 866 2"><rect width="866" height="1.3" fill="#80868e"/></svg>
<svg style="position:absolute;left:1255.4px;top:771px;" width="2" height="10.4" viewBox="0 0 2 10.4"><rect width="1.5" height="10.4" fill="#80868e"/></svg>
<span class="t" style="left:1233.38px;top:783px;font-size:18.4px;transform:scaleX(1.0130);color:#1c2b34;">11:15</span>
<svg style="position:absolute;left:1472px;top:771px;" width="2" height="10.4" viewBox="0 0 2 10.4"><rect width="1.5" height="10.4" fill="#80868e"/></svg>
<span class="t" style="left:1449.98px;top:783px;font-size:18.4px;transform:scaleX(1.0118);color:#1c2b34;">11:30</span>
<svg style="position:absolute;left:1688.4px;top:771px;" width="2" height="10.4" viewBox="0 0 2 10.4"><rect width="1.5" height="10.4" fill="#80868e"/></svg>
<span class="t" style="left:1666.38px;top:783px;font-size:18.4px;transform:scaleX(1.0130);color:#1c2b34;">11:45</span>
<svg style="position:absolute;left:1905px;top:771px;" width="2" height="10.4" viewBox="0 0 2 10.4"><rect width="1.5" height="10.4" fill="#80868e"/></svg>
<span class="t" style="left:1883.02px;top:783px;font-size:18.4px;transform:scaleX(0.9717);color:#1c2b34;">12:00</span>
<svg style="position:absolute;left:2100px;top:440px;" width="1002" height="380" viewBox="2100 440 1002 380"><rect x="2194" y="465.0" width="865.1999999999998" height="1.2" fill="#dedfe3"/><rect x="2194" y="526.3" width="865.1999999999998" height="1.2" fill="#dedfe3"/><rect x="2194" y="587.7" width="865.1999999999998" height="1.2" fill="#dedfe3"/><rect x="2194" y="648.7" width="865.1999999999998" height="1.2" fill="#dedfe3"/><rect x="2194" y="710.0" width="865.1999999999998" height="1.2" fill="#dedfe3"/><clipPath id="c3"><rect x="2194" y="450" width="866" height="325"/></clipPath><g clip-path="url(#c3)"><polyline points="2194.0,730.4 2250.1,734.3 2322.4,740.7 2394.6,747.1 2466.9,753.0 2539.2,758.9 2611.4,764.6 2683.7,768.4 2756.0,768.4 2828.3,768.4 2900.5,768.4 2972.8,768.4 3045.1,768.4" fill="none" stroke="#2b96cf" stroke-width="3.5" stroke-linejoin="round" stroke-linecap="round"/><polyline points="2194.0,768.4 2250.1,768.4 2322.4,768.2 2394.6,768.4 2466.9,766.4 2539.2,768.2 2611.4,768.2 2683.7,767.4 2756.0,768.2 2828.3,768.2 2900.5,767.8 2972.8,768.2 3045.1,768.6" fill="none" stroke="#efbd12" stroke-width="3.5" stroke-linejoin="round" stroke-linecap="round"/><polyline points="2194.0,642.8 2250.1,642.4 2322.4,650.2 2394.6,644.3 2466.9,648.0 2539.2,640.4 2611.4,647.5 2683.7,648.0 2756.0,652.4 2828.3,642.6 2900.5,659.5 2972.8,648.5 3045.1,636.2" fill="none" stroke="#7cc0e2" stroke-width="3.5" stroke-linejoin="round" stroke-linecap="round"/><polyline points="2194.0,688.2 2250.1,653.4 2322.4,683.6 2394.6,657.8 2466.9,679.6 2539.2,673.0 2611.4,690.2 2683.7,664.4 2756.0,700.7 2828.3,646.8 2900.5,674.2 2972.8,726.5 3045.1,650.9" fill="none" stroke="#8f79c1" stroke-width="3.5" stroke-linejoin="round" stroke-linecap="round"/><polyline points="2194.0,644.3 2250.1,626.4 2322.4,704.2 2394.6,618.8 2466.9,679.6 2539.2,657.8 2611.4,592.1 2683.7,673.0 2756.0,648.5 2828.3,681.6 2900.5,673.0 2972.8,663.2" fill="none" stroke="#8f79c1" stroke-width="3.5" stroke-linejoin="round" stroke-linecap="round"/><polyline points="2194.0,693.4 2250.1,727.7 2322.4,672.5 2394.6,588.6 2466.9,691.4 2539.2,723.3 2611.4,684.5 2683.7,666.9 2756.0,639.9 2828.3,641.1 2900.5,642.1 2972.8,648.0" fill="none" stroke="#efbd12" stroke-width="3.5" stroke-linejoin="round" stroke-linecap="round"/><polyline points="2194.0,536.9 2250.1,538.4 2322.4,534.2 2394.6,534.4 2466.9,539.1 2539.2,539.6 2611.4,539.8 2683.7,538.6 2756.0,535.4 2828.3,537.9 2900.5,534.9 2972.8,535.4 3045.1,540.1" fill="none" stroke="#a88fd0" stroke-width="3.5" stroke-linejoin="round" stroke-linecap="round"/><polyline points="2194.0,523.2 2250.1,523.2 2322.4,523.2 2394.6,523.2 2466.9,523.2 2539.2,523.2 2611.4,523.2 2683.7,523.4 2756.0,523.4 2828.3,523.4 2900.5,523.4 2972.8,523.4 3045.1,523.4" fill="none" stroke="#2b96cf" stroke-width="3.5" stroke-linejoin="round" stroke-linecap="round"/><polyline points="2194.0,521.7 2250.1,520.6 2322.4,521.7 2394.6,521.4 2466.9,522.6 2539.2,521.0 2611.4,521.7 2683.7,522.9 2756.0,520.9 2828.3,522.4 2900.5,520.2 2972.8,524.6" fill="none" stroke="#f7cf26" stroke-width="3.5" stroke-linejoin="round" stroke-linecap="round"/></g><rect x="2194" y="771" width="865.1999999999998" height="1.3" fill="#80868e"/></svg>
<span class="t" style="left:2156.40px;top:457px;font-size:18.4px;letter-spacing:0.300px;color:#1c2b34;">100</span>
<span class="t" style="left:2166.78px;top:519px;font-size:18.4px;letter-spacing:0.300px;color:#1c2b34;">80</span>
<span class="t" style="left:2166.78px;top:580px;font-size:18.4px;letter-spacing:0.300px;color:#1c2b34;">60</span>
<span class="t" style="left:2166.78px;top:641px;font-size:18.4px;letter-spacing:0.300px;color:#1c2b34;">40</span>
<span class="t" style="left:2166.78px;top:702px;font-size:18.4px;letter-spacing:0.300px;color:#1c2b34;">20</span>
<span class="t" style="left:2177.16px;top:763px;font-size:18.4px;letter-spacing:0.300px;color:#1c2b34;">0</span>
<svg style="position:absolute;left:2249.3px;top:771px;" width="2" height="10.4" viewBox="0 0 2 10.4"><rect width="1.5" height="10.4" fill="#80868e"/></svg>
<span class="t" style="left:2227.28px;top:783px;font-size:18.4px;transform:scaleX(1.0130);color:#1c2b34;">11:15</span>
<svg style="position:absolute;left:2465.6px;top:771px;" width="2" height="10.4" viewBox="0 0 2 10.4"><rect width="1.5" height="10.4" fill="#80868e"/></svg>
<span class="t" style="left:2443.58px;top:783px;font-size:18.4px;transform:scaleX(1.0118);color:#1c2b34;">11:30</span>
<svg style="position:absolute;left:2682.5px;top:771px;" width="2" height="10.4" viewBox="0 0 2 10.4"><rect width="1.5" height="10.4" fill="#80868e"/></svg>
<span class="t" style="left:2660.48px;top:783px;font-size:18.4px;transform:scaleX(1.0130);color:#1c2b34;">11:45</span>
<svg style="position:absolute;left:2899px;top:771px;" width="2" height="10.4" viewBox="0 0 2 10.4"><rect width="1.5" height="10.4" fill="#80868e"/></svg>
<span class="t" style="left:2877.02px;top:783px;font-size:18.4px;transform:scaleX(0.9717);color:#1c2b34;">12:00</span>
<span class="t" style="left:2129.2px;top:636px;font-size:20.2px;color:#8b939b;letter-spacing:0.5px;transform-origin:50% 50%;transform:translate(-50%,-50%) rotate(-90deg)">Milliseconds</span>
</section>
<aside aria-label="Facets">
<span class="t" style="left:132.87px;top:838px;font-size:23.8px;color:#5a636d;">Source</span>
<span class="t" style="left:264.94px;top:838px;font-size:23.8px;transform:scaleX(1.0782);color:#1c2b34;">Destination</span>
<svg style="position:absolute;left:443.4px;top:839.6px;" width="21" height="21" viewBox="0 0 21 21"><rect x="0" y="7.7" width="21" height="5.6" rx="1.7" fill="#006bc2"/><rect x="7.7" y="0" width="5.6" height="21" rx="1.7" fill="#006bc2"/></svg>
<span class="t" style="left:478.23px;top:838px;font-size:23.8px;transform:scaleX(1.0502);color:#006bc2;">Add</span>
<div style="position:absolute;left:264px;top:874px;width:130px;height:6px;background:#006bc2"></div>
<div style="position:absolute;left:104px;top:880px;width:436px;height:2px;background:#dadbe0"></div>
<div style="position:absolute;left:104px;top:896px;width:436px;height:52px;border:2px solid #dadbe0;border-radius:7px;background:#fff"></div>
<svg style="position:absolute;left:118.2px;top:910.2px;" width="25.6" height="25.6" viewBox="0 0 28.4 28.4"><circle cx="11.6" cy="11.6" r="9.2" fill="none" stroke="#8a9199" stroke-width="4.4"/><path d="M18.4 18.4 L26 26" stroke="#8a9199" stroke-width="4.6" stroke-linecap="round"/></svg>
<span class="t" style="left:156.06px;top:912px;font-size:23.8px;transform:scaleX(1.0062);color:#8b939b;">Search facets</span>
<div style="position:absolute;left:104px;top:962px;width:436px;height:42px;background:#eaeaed;border-radius:4px"></div>
<svg style="position:absolute;left:122px;top:978px;" width="17" height="10.6" viewBox="0 0 17 10.6"><path d="M1 1 L8.5 9.4 L16 1" fill="none" stroke="#626c76" stroke-width="2.3"/></svg>
<span class="t" style="left:151.10px;top:973px;font-size:20.2px;transform:scaleX(0.9250);color:#5a636d;">NETWORK</span>
<div style="position:absolute;left:104px;top:1886px;width:436px;height:42px;background:#eaeaed;border-radius:4px"></div>
<svg style="position:absolute;left:122px;top:1902px;" width="17" height="10.6" viewBox="0 0 17 10.6"><path d="M1 1 L8.5 9.4 L16 1" fill="none" stroke="#626c76" stroke-width="2.3"/></svg>
<span class="t" style="left:151.09px;top:1897px;font-size:20.2px;transform:scaleX(0.9308);color:#5a636d;">DNS</span>
<div style="position:absolute;left:104px;top:2006px;width:436px;height:16px;background:#eaeaed;border-radius:4px 4px 0 0"></div>
<svg style="position:absolute;left:123.2px;top:1037px;" width="19" height="11.6" viewBox="0 0 19 11.6"><path d="M1 1 L9.5 10.4 L18 1" fill="none" stroke="#626c76" stroke-width="2.3"/></svg>
<span class="t" style="left:154.76px;top:1032px;font-size:23.8px;transform:scaleX(1.0633);font-weight:700;color:#1c2b34;">Network Transport</span>
<svg style="position:absolute;left:124px;top:1085.8px;" width="26" height="24.4" viewBox="0 0 26 24.4"><rect width="26" height="24.4" rx="4.6" fill="#006bc2"/><path d="M4.9 12.5 L10.6 17.6 L20.7 7.3" fill="none" stroke="#fff" stroke-width="4"/></svg>
<div style="position:absolute;left:162px;top:1084px;width:8px;height:30px;background:#fcb42c;border-radius:4px"></div>
<span class="t" style="left:178.60px;top:1087px;font-size:23.8px;transform:scaleX(1.0614);color:#1c2b34;">tcp</span>
<div style="position:absolute;left:104px;top:1150px;width:436px;height:2px;background:#dcdce2"></div>
<svg style="position:absolute;left:123.2px;top:1179px;" width="19" height="11.6" viewBox="0 0 19 11.6"><path d="M1 1 L9.5 10.4 L18 1" fill="none" stroke="#626c76" stroke-width="2.3"/></svg>
<span class="t" style="left:154.77px;top:1174px;font-size:23.8px;transform:scaleX(1.0546);font-weight:700;color:#1c2b34;">Network Destination IP Type</span>
<svg style="position:absolute;left:124px;top:1227.8px;" width="26" height="24.4" viewBox="0 0 26 24.4"><rect width="26" height="24.4" rx="4.6" fill="#006bc2"/><path d="M4.9 12.5 L10.6 17.6 L20.7 7.3" fill="none" stroke="#fff" stroke-width="4"/></svg>
<span class="t" style="left:161.47px;top:1230px;font-size:23.8px;transform:scaleX(1.1165);color:#1c2b34;">other</span>
<div style="position:absolute;left:104px;top:1292px;width:436px;height:2px;background:#dcdce2"></div>
<svg style="position:absolute;left:128px;top:1318.4px;" width="11" height="19.4" viewBox="0 0 11 19.4"><path d="M1 1 L9.6 9.7 L1 18.4" fill="none" stroke="#626c76" stroke-width="2.3"/></svg>
<span class="t" style="left:154.79px;top:1317px;font-size:23.8px;transform:scaleX(1.0325);font-weight:700;color:#1c2b34;">Destination Rollup</span>
<div style="position:absolute;left:104px;top:1358px;width:436px;height:2px;background:#dcdce2"></div>
<svg style="position:absolute;left:123.2px;top:1387px;" width="19" height="11.6" viewBox="0 0 19 11.6"><path d="M1 1 L9.5 10.4 L18 1" fill="none" stroke="#626c76" stroke-width="2.3"/></svg>
<span class="t" style="left:154.77px;top:1382px;font-size:23.8px;transform:scaleX(1.0533);font-weight:700;color:#1c2b34;">Domain</span>
<svg style="position:absolute;left:124px;top:1435.8px;" width="26" height="24.4" viewBox="0 0 26 24.4"><rect width="26" height="24.4" rx="4.6" fill="#006bc2"/><path d="M4.9 12.5 L10.6 17.6 L20.7 7.3" fill="none" stroke="#fff" stroke-width="4"/></svg>
<span class="t" style="left:161.54px;top:1438px;font-size:23.8px;transform:scaleX(1.0347);color:#1c2b34;">e5e1ca4b-default-adserv...</span>
<svg style="position:absolute;left:124px;top:1481.8px;" width="26" height="24.4" viewBox="0 0 26 24.4"><rect width="26" height="24.4" rx="4.6" fill="#006bc2"/><path d="M4.9 12.5 L10.6 17.6 L20.7 7.3" fill="none" stroke="#fff" stroke-width="4"/></svg>
<span class="t" style="left:161.54px;top:1484px;font-size:23.8px;transform:scaleX(1.0388);color:#1c2b34;">elasticloadbalancing.us-...</span>
<div style="position:absolute;left:104px;top:1546px;width:436px;height:2px;background:#dcdce2"></div>
<svg style="position:absolute;left:128px;top:1571.4px;" width="11" height="19.4" viewBox="0 0 11 19.4"><path d="M1 1 L9.6 9.7 L1 18.4" fill="none" stroke="#626c76" stroke-width="2.3"/></svg>
<span class="t" style="left:154.76px;top:1570px;font-size:23.8px;transform:scaleX(1.0626);font-weight:700;color:#1c2b34;">Network Direction</span>
<div style="position:absolute;left:104px;top:1612px;width:436px;height:2px;background:#dcdce2"></div>
<svg style="position:absolute;left:128px;top:1637.4px;" width="11" height="19.4" viewBox="0 0 11 19.4"><path d="M1 1 L9.6 9.7 L1 18.4" fill="none" stroke="#626c76" stroke-width="2.3"/></svg>
<span class="t" style="left:154.76px;top:1636px;font-size:23.8px;transform:scaleX(1.0605);font-weight:700;color:#1c2b34;">Network Destination IP</span>
<div style="position:absolute;left:104px;top:1680px;width:436px;height:2px;background:#dcdce2"></div>
<svg style="position:absolute;left:128px;top:1704.4px;" width="11" height="19.4" viewBox="0 0 11 19.4"><path d="M1 1 L9.6 9.7 L1 18.4" fill="none" stroke="#626c76" stroke-width="2.3"/></svg>
<span class="t" style="left:154.76px;top:1703px;font-size:23.8px;transform:scaleX(1.0580);font-weight:700;color:#1c2b34;">Network Destination Port</span>
<div style="position:absolute;left:104px;top:1746px;width:436px;height:2px;background:#dcdce2"></div>
<svg style="position:absolute;left:128px;top:1769.4px;" width="11" height="19.4" viewBox="0 0 11 19.4"><path d="M1 1 L9.6 9.7 L1 18.4" fill="none" stroke="#626c76" stroke-width="2.3"/></svg>
<span class="t" style="left:154.78px;top:1768px;font-size:23.8px;transform:scaleX(1.0421);font-weight:700;color:#1c2b34;">Destination preNAT IP</span>
<div style="position:absolute;left:104px;top:1812px;width:436px;height:2px;background:#dcdce2"></div>
<svg style="position:absolute;left:128px;top:1837.4px;" width="11" height="19.4" viewBox="0 0 11 19.4"><path d="M1 1 L9.6 9.7 L1 18.4" fill="none" stroke="#626c76" stroke-width="2.3"/></svg>
<span class="t" style="left:154.76px;top:1836px;font-size:23.8px;transform:scaleX(1.0592);font-weight:700;color:#1c2b34;">Network Family</span>
<svg style="position:absolute;left:128px;top:1957.4px;" width="11" height="19.4" viewBox="0 0 11 19.4"><path d="M1 1 L9.6 9.7 L1 18.4" fill="none" stroke="#626c76" stroke-width="2.3"/></svg>
<span class="t" style="left:154.84px;top:1956px;font-size:23.8px;transform:scaleX(0.9912);font-weight:700;color:#1c2b34;">DNS Server</span>
</aside>
<main aria-label="Aggregate connections">
<svg style="position:absolute;left:590px;top:858px;" width="26" height="24" viewBox="0 0 26 24"><defs><pattern id="hatch2" width="3" height="3" patternUnits="userSpaceOnUse" patternTransform="rotate(-45)"><rect width="3" height="1.3" fill="#006bc2"/></pattern></defs><rect x="1" y="1" width="24" height="22" rx="2.6" fill="#fff" stroke="#006bc2" stroke-width="1.7"/><rect x="2" y="2" width="8" height="20" fill="url(#hatch2)" opacity="0.75"/><path d="M19.8 6.6 L13.6 12 L19.8 17.4" fill="none" stroke="#006bc2" stroke-width="2.1"/></svg>
<span class="t" style="left:626.51px;top:858px;font-size:23.8px;transform:scaleX(1.0441);color:#006bc2;">Hide Controls</span>
<div style="position:absolute;left:816px;top:854px;width:2px;height:30px;background:#dadbe0"></div>
<span class="t" style="left:844.67px;top:860px;font-size:23.8px;transform:scaleX(1.0327);font-weight:700;color:#1c2b34;">9 aggregate connections found</span>
<div style="position:absolute;left:2182px;top:846px;width:464px;height:46px;background:#f4f4f5;border-radius:6px"></div>
<span class="t" style="left:2196.54px;top:860px;font-size:23.8px;transform:scaleX(1.0306);color:#1c2b34;">Last updated: Mon, Apr 26, 12:11:06 pm</span>
<div style="position:absolute;left:2660px;top:844px;width:206px;height:50px;border:2px solid #dadbe0;border-radius:7px;background:#fff"></div>
<svg style="position:absolute;left:2681.7px;top:859.4px;" width="22.6" height="22.6" viewBox="0 0 26 26"><g transform="translate(13 13)" fill="#6c747d"><circle r="9.3"/><rect x="-2.4" y="-12.9" width="4.8" height="7" rx="0.9" transform="rotate(0)"/><rect x="-2.4" y="-12.9" width="4.8" height="7" rx="0.9" transform="rotate(45)"/><rect x="-2.4" y="-12.9" width="4.8" height="7" rx="0.9" transform="rotate(90)"/><rect x="-2.4" y="-12.9" width="4.8" height="7" rx="0.9" transform="rotate(135)"/><rect x="-2.4" y="-12.9" width="4.8" height="7" rx="0.9" transform="rotate(180)"/><rect x="-2.4" y="-12.9" width="4.8" height="7" rx="0.9" transform="rotate(225)"/><rect x="-2.4" y="-12.9" width="4.8" height="7" rx="0.9" transform="rotate(270)"/><rect x="-2.4" y="-12.9" width="4.8" height="7" rx="0.9" transform="rotate(315)"/><circle r="4.5" fill="#fff"/></g></svg>
<span class="t" style="left:2716.68px;top:858px;font-size:23.8px;transform:scaleX(1.0595);color:#1c2b34;">Filter Traffic</span>
<div style="position:absolute;left:2882px;top:844px;width:192px;height:50px;border:2px solid #dadbe0;border-radius:7px;background:#fff"></div>
<svg style="position:absolute;left:2902.9px;top:859.4px;" width="22.6" height="22.6" viewBox="0 0 26 26"><g transform="translate(13 13)" fill="#6c747d"><circle r="9.3"/><rect x="-2.4" y="-12.9" width="4.8" height="7" rx="0.9" transform="rotate(0)"/><rect x="-2.4" y="-12.9" width="4.8" height="7" rx="0.9" transform="rotate(45)"/><rect x="-2.4" y="-12.9" width="4.8" height="7" rx="0.9" transform="rotate(90)"/><rect x="-2.4" y="-12.9" width="4.8" height="7" rx="0.9" transform="rotate(135)"/><rect x="-2.4" y="-12.9" width="4.8" height="7" rx="0.9" transform="rotate(180)"/><rect x="-2.4" y="-12.9" width="4.8" height="7" rx="0.9" transform="rotate(225)"/><rect x="-2.4" y="-12.9" width="4.8" height="7" rx="0.9" transform="rotate(270)"/><rect x="-2.4" y="-12.9" width="4.8" height="7" rx="0.9" transform="rotate(315)"/><circle r="4.5" fill="#fff"/></g></svg>
<span class="t" style="left:2938.50px;top:858px;font-size:23.8px;transform:scaleX(1.0239);color:#1c2b34;">Customize</span>
<div style="position:absolute;left:568px;top:910px;width:2506px;height:2px;background:#e0e0e5"></div>
<div style="position:absolute;left:568px;top:910px;width:2px;height:632px;background:#e0e0e5"></div>
<div style="position:absolute;left:3072px;top:910px;width:2px;height:632px;background:#e0e0e5"></div>
<div style="position:absolute;left:568px;top:960px;width:2454px;height:2px;background:#e0e0e5"></div>
<div style="position:absolute;left:568px;top:1010px;width:2506px;height:2px;background:#e0e0e5"></div>
<div style="position:absolute;left:568px;top:1068px;width:2506px;height:2px;background:#e0e0e5"></div>
<div style="position:absolute;left:568px;top:1128px;width:2506px;height:2px;background:#e0e0e5"></div>
<div style="position:absolute;left:568px;top:1186px;width:2506px;height:2px;background:#e0e0e5"></div>
<div style="position:absolute;left:568px;top:1246px;width:2506px;height:2px;background:#e0e0e5"></div>
<div style="position:absolute;left:568px;top:1304px;width:2506px;height:2px;background:#e0e0e5"></div>
<div style="position:absolute;left:568px;top:1364px;width:2506px;height:2px;background:#e0e0e5"></div>
<div style="position:absolute;left:568px;top:1422px;width:2506px;height:2px;background:#e0e0e5"></div>
<div style="position:absolute;left:568px;top:1482px;width:2506px;height:2px;background:#e0e0e5"></div>
<div style="position:absolute;left:568px;top:1540px;width:2506px;height:2px;background:#e0e0e5"></div>
<div style="position:absolute;left:1666px;top:910px;width:2px;height:632px;background:#e0e0e5"></div>
<div style="position:absolute;left:1932px;top:910px;width:2px;height:632px;background:#e0e0e5"></div>
<div style="position:absolute;left:2182px;top:910px;width:2px;height:632px;background:#e0e0e5"></div>
<div style="position:absolute;left:3020px;top:910px;width:2px;height:632px;background:#e0e0e5"></div>
<span class="t" style="left:1769.84px;top:924px;font-size:23.8px;transform:scaleX(0.8971);color:#66707a;">SENT</span>
<span class="t" style="left:2002.62px;top:924px;font-size:23.8px;transform:scaleX(0.8885);color:#66707a;">RECEIVED</span>
<span class="t" style="left:2581.37px;top:924px;font-size:23.8px;transform:scaleX(0.8661);color:#66707a;">TCP</span>
<span class="t" style="left:583.45px;top:976px;font-size:21.8px;transform:scaleX(0.9107);font-weight:700;color:#1c2b34;">SOURCE</span>
<span class="t" style="left:1129.86px;top:976px;font-size:21.8px;transform:scaleX(1.0207);font-weight:700;color:#1c2b34;">DESTINATION</span>
<span class="t" style="left:1828.42px;top:976px;font-size:21.8px;transform:scaleX(0.9735);font-weight:700;color:#1c2b34;">VOLUME</span>
<svg style="position:absolute;left:1800px;top:976px;" width="12" height="19" viewBox="0 0 12 19"><path d="M6 0.4 V17 M0.9 11.6 L6 17.2 L11.1 11.6" fill="none" stroke="#1c2b34" stroke-width="2.4"/></svg>
<span class="t" style="left:2078.42px;top:976px;font-size:21.8px;transform:scaleX(0.9735);font-weight:700;color:#1c2b34;">VOLUME</span>
<span class="t" style="left:2311.83px;top:976px;font-size:21.8px;transform:scaleX(0.9559);font-weight:700;color:#1c2b34;">RETRANSMITS</span>
<span class="t" style="left:2604.13px;top:976px;font-size:21.8px;transform:scaleX(0.9540);font-weight:700;color:#1c2b34;">LATENCY</span>
<span class="t" style="left:2842.60px;top:976px;font-size:21.8px;transform:scaleX(0.9793);font-weight:700;color:#1c2b34;">EST. CONNS. / S</span>
<span class="t" style="left:582.61px;top:1030px;font-size:23.8px;transform:scaleX(1.0666);color:#1c2b34;">corp-site</span>
<span class="t" style="left:1129.79px;top:1030px;font-size:23.8px;transform:scaleX(1.0873);color:#1c2b34;">elb</span>
<span class="t" style="left:1888.37px;top:1034px;font-size:19.8px;font-weight:700;color:#636d77;">MB</span>
<span class="t" style="left:1837.13px;top:1030px;font-size:23.8px;transform:scaleX(0.9800);font-weight:700;color:#1c2b34;">5.17</span>
<span class="t" style="left:2138.37px;top:1034px;font-size:19.8px;font-weight:700;color:#636d77;">MB</span>
<span class="t" style="left:2087.09px;top:1030px;font-size:23.8px;transform:scaleX(0.9800);font-weight:700;color:#1c2b34;">4.22</span>
<span class="t" style="left:2448.79px;top:1030px;font-size:23.8px;transform:scaleX(0.9800);font-weight:700;color:#1c2b34;">0</span>
<span class="t" style="left:2672.02px;top:1034px;font-size:19.8px;font-weight:700;color:#636d77;">ms</span>
<span class="t" style="left:2620.73px;top:1030px;font-size:23.8px;transform:scaleX(0.9800);font-weight:700;color:#1c2b34;">40.2</span>
<span class="t" style="left:2930.96px;top:1034px;font-size:19.8px;transform:scaleX(1.0350);font-weight:700;color:#636d77;">conns/s</span>
<span class="t" style="left:2878.86px;top:1030px;font-size:23.8px;transform:scaleX(0.9800);font-weight:700;color:#1c2b34;">4.50</span>
<svg style="position:absolute;left:3042px;top:1025.2px;" width="8" height="30" viewBox="0 0 8 30"><circle cx="4" cy="4.1" r="3.3" fill="#7a828b"/><circle cx="4" cy="15" r="3.3" fill="#7a828b"/><circle cx="4" cy="25.9" r="3.3" fill="#7a828b"/></svg>
<span class="t" style="left:582.56px;top:1090px;font-size:23.8px;transform:scaleX(1.0912);color:#1c2b34;">auth-dotnet</span>
<span class="t" style="left:1129.79px;top:1090px;font-size:23.8px;transform:scaleX(1.0873);color:#1c2b34;">elb</span>
<span class="t" style="left:1888.37px;top:1094px;font-size:19.8px;font-weight:700;color:#636d77;">MB</span>
<span class="t" style="left:1836.88px;top:1090px;font-size:23.8px;transform:scaleX(0.9800);font-weight:700;color:#1c2b34;">3.24</span>
<span class="t" style="left:2138.37px;top:1094px;font-size:19.8px;font-weight:700;color:#636d77;">MB</span>
<span class="t" style="left:2087.11px;top:1090px;font-size:23.8px;transform:scaleX(0.9800);font-weight:700;color:#1c2b34;">2.40</span>
<span class="t" style="left:2448.79px;top:1090px;font-size:23.8px;transform:scaleX(0.9800);font-weight:700;color:#1c2b34;">0</span>
<span class="t" style="left:2672.02px;top:1094px;font-size:19.8px;font-weight:700;color:#636d77;">ms</span>
<span class="t" style="left:2620.73px;top:1090px;font-size:23.8px;transform:scaleX(0.9800);font-weight:700;color:#1c2b34;">30.2</span>
<span class="t" style="left:2930.96px;top:1094px;font-size:19.8px;transform:scaleX(1.0350);font-weight:700;color:#636d77;">conns/s</span>
<span class="t" style="left:2865.06px;top:1090px;font-size:23.8px;transform:scaleX(0.9800);font-weight:700;color:#1c2b34;">392m</span>
<svg style="position:absolute;left:3042px;top:1084.05px;" width="8" height="30" viewBox="0 0 8 30"><circle cx="4" cy="4.1" r="3.3" fill="#7a828b"/><circle cx="4" cy="15" r="3.3" fill="#7a828b"/><circle cx="4" cy="25.9" r="3.3" fill="#7a828b"/></svg>
<span class="t" style="left:582.63px;top:1148px;font-size:23.8px;transform:scaleX(1.0472);color:#1c2b34;">email-api-py</span>
<span class="t" style="left:1129.79px;top:1148px;font-size:23.8px;transform:scaleX(1.0873);color:#1c2b34;">elb</span>
<span class="t" style="left:1890.45px;top:1152px;font-size:19.8px;font-weight:700;color:#636d77;">KB</span>
<span class="t" style="left:1845.90px;top:1148px;font-size:23.8px;transform:scaleX(0.9800);font-weight:700;color:#1c2b34;">430</span>
<span class="t" style="left:2140.45px;top:1152px;font-size:19.8px;font-weight:700;color:#636d77;">KB</span>
<span class="t" style="left:2095.87px;top:1148px;font-size:23.8px;transform:scaleX(0.9800);font-weight:700;color:#1c2b34;">352</span>
<span class="t" style="left:2448.79px;top:1148px;font-size:23.8px;transform:scaleX(0.9800);font-weight:700;color:#1c2b34;">0</span>
<span class="t" style="left:2672.02px;top:1152px;font-size:19.8px;font-weight:700;color:#636d77;">ms</span>
<span class="t" style="left:2620.75px;top:1148px;font-size:23.8px;transform:scaleX(0.9800);font-weight:700;color:#1c2b34;">76.0</span>
<span class="t" style="left:2930.96px;top:1152px;font-size:19.8px;transform:scaleX(1.0350);font-weight:700;color:#636d77;">conns/s</span>
<span class="t" style="left:2865.06px;top:1148px;font-size:23.8px;transform:scaleX(0.9800);font-weight:700;color:#1c2b34;">451m</span>
<svg style="position:absolute;left:3042px;top:1142.9px;" width="8" height="30" viewBox="0 0 8 30"><circle cx="4" cy="4.1" r="3.3" fill="#7a828b"/><circle cx="4" cy="15" r="3.3" fill="#7a828b"/><circle cx="4" cy="25.9" r="3.3" fill="#7a828b"/></svg>
<span class="t" style="left:583.67px;top:1208px;font-size:23.8px;transform:scaleX(1.0520);color:#1c2b34;">web-store</span>
<span class="t" style="left:1129.79px;top:1208px;font-size:23.8px;transform:scaleX(1.0873);color:#1c2b34;">elb</span>
<span class="t" style="left:1890.45px;top:1212px;font-size:19.8px;font-weight:700;color:#636d77;">KB</span>
<span class="t" style="left:1845.89px;top:1208px;font-size:23.8px;transform:scaleX(0.9800);font-weight:700;color:#1c2b34;">317</span>
<span class="t" style="left:2140.45px;top:1212px;font-size:19.8px;font-weight:700;color:#636d77;">KB</span>
<span class="t" style="left:2095.84px;top:1208px;font-size:23.8px;transform:scaleX(0.9800);font-weight:700;color:#1c2b34;">258</span>
<span class="t" style="left:2448.79px;top:1208px;font-size:23.8px;transform:scaleX(0.9800);font-weight:700;color:#1c2b34;">0</span>
<span class="t" style="left:2678.02px;top:1212px;font-size:19.8px;font-weight:700;color:#636d77;">µs</span>
<span class="t" style="left:2633.44px;top:1208px;font-size:23.8px;transform:scaleX(0.9800);font-weight:700;color:#1c2b34;">943</span>
<span class="t" style="left:2930.96px;top:1212px;font-size:19.8px;transform:scaleX(1.0350);font-weight:700;color:#636d77;">conns/s</span>
<span class="t" style="left:2865.06px;top:1208px;font-size:23.8px;transform:scaleX(0.9800);font-weight:700;color:#1c2b34;">267m</span>
<svg style="position:absolute;left:3042px;top:1201.75px;" width="8" height="30" viewBox="0 0 8 30"><circle cx="4" cy="4.1" r="3.3" fill="#7a828b"/><circle cx="4" cy="15" r="3.3" fill="#7a828b"/><circle cx="4" cy="25.9" r="3.3" fill="#7a828b"/></svg>
<span class="t" style="left:582.61px;top:1266px;font-size:23.8px;transform:scaleX(1.0469);color:#1c2b34;">ad-server</span>
<span class="t" style="left:1129.79px;top:1266px;font-size:23.8px;transform:scaleX(1.0873);color:#1c2b34;">elb</span>
<span class="t" style="left:1890.45px;top:1270px;font-size:19.8px;font-weight:700;color:#636d77;">KB</span>
<span class="t" style="left:1844.93px;top:1266px;font-size:23.8px;transform:scaleX(0.9800);font-weight:700;color:#1c2b34;">204</span>
<span class="t" style="left:2140.45px;top:1270px;font-size:19.8px;font-weight:700;color:#636d77;">KB</span>
<span class="t" style="left:2095.87px;top:1266px;font-size:23.8px;transform:scaleX(0.9800);font-weight:700;color:#1c2b34;">166</span>
<span class="t" style="left:2448.79px;top:1266px;font-size:23.8px;transform:scaleX(0.9800);font-weight:700;color:#1c2b34;">0</span>
<span class="t" style="left:2672.02px;top:1270px;font-size:19.8px;font-weight:700;color:#636d77;">ms</span>
<span class="t" style="left:2620.77px;top:1266px;font-size:23.8px;transform:scaleX(0.9800);font-weight:700;color:#1c2b34;">80.7</span>
<span class="t" style="left:2930.96px;top:1270px;font-size:19.8px;transform:scaleX(1.0350);font-weight:700;color:#636d77;">conns/s</span>
<span class="t" style="left:2865.06px;top:1266px;font-size:23.8px;transform:scaleX(0.9800);font-weight:700;color:#1c2b34;">214m</span>
<svg style="position:absolute;left:3042px;top:1260.6px;" width="8" height="30" viewBox="0 0 8 30"><circle cx="4" cy="4.1" r="3.3" fill="#7a828b"/><circle cx="4" cy="15" r="3.3" fill="#7a828b"/><circle cx="4" cy="25.9" r="3.3" fill="#7a828b"/></svg>
<span class="t" style="left:582.45px;top:1326px;font-size:23.8px;transform:scaleX(1.0847);color:#1c2b34;">product-recommendation</span>
<span class="t" style="left:1129.79px;top:1326px;font-size:23.8px;transform:scaleX(1.0873);color:#1c2b34;">elb</span>
<span class="t" style="left:1890.45px;top:1330px;font-size:19.8px;font-weight:700;color:#636d77;">KB</span>
<span class="t" style="left:1845.81px;top:1326px;font-size:23.8px;transform:scaleX(0.9800);font-weight:700;color:#1c2b34;">145</span>
<span class="t" style="left:2140.45px;top:1330px;font-size:19.8px;font-weight:700;color:#636d77;">KB</span>
<span class="t" style="left:2096.92px;top:1326px;font-size:23.8px;transform:scaleX(0.9800);font-weight:700;color:#1c2b34;">119</span>
<span class="t" style="left:2448.79px;top:1326px;font-size:23.8px;transform:scaleX(0.9800);font-weight:700;color:#1c2b34;">0</span>
<span class="t" style="left:2672.02px;top:1330px;font-size:19.8px;font-weight:700;color:#636d77;">ms</span>
<span class="t" style="left:2620.73px;top:1326px;font-size:23.8px;transform:scaleX(0.9800);font-weight:700;color:#1c2b34;">36.2</span>
<span class="t" style="left:2930.96px;top:1330px;font-size:19.8px;transform:scaleX(1.0350);font-weight:700;color:#636d77;">conns/s</span>
<span class="t" style="left:2865.06px;top:1326px;font-size:23.8px;transform:scaleX(0.9800);font-weight:700;color:#1c2b34;">153m</span>
<svg style="position:absolute;left:3042px;top:1319.45px;" width="8" height="30" viewBox="0 0 8 30"><circle cx="4" cy="4.1" r="3.3" fill="#7a828b"/><circle cx="4" cy="15" r="3.3" fill="#7a828b"/><circle cx="4" cy="25.9" r="3.3" fill="#7a828b"/></svg>
<span class="t" style="left:582.62px;top:1384px;font-size:23.8px;transform:scaleX(1.0583);color:#1c2b34;">chaos-engineering</span>
<span class="t" style="left:1129.79px;top:1384px;font-size:23.8px;transform:scaleX(1.0873);color:#1c2b34;">elb</span>
<span class="t" style="left:1890.45px;top:1388px;font-size:19.8px;font-weight:700;color:#636d77;">KB</span>
<span class="t" style="left:1845.87px;top:1384px;font-size:23.8px;transform:scaleX(0.9800);font-weight:700;color:#1c2b34;">136</span>
<span class="t" style="left:2140.45px;top:1388px;font-size:19.8px;font-weight:700;color:#636d77;">KB</span>
<span class="t" style="left:2097.96px;top:1384px;font-size:23.8px;transform:scaleX(0.9800);font-weight:700;color:#1c2b34;">111</span>
<span class="t" style="left:2448.79px;top:1384px;font-size:23.8px;transform:scaleX(0.9800);font-weight:700;color:#1c2b34;">0</span>
<span class="t" style="left:2672.02px;top:1388px;font-size:19.8px;font-weight:700;color:#636d77;">ms</span>
<span class="t" style="left:2620.52px;top:1384px;font-size:23.8px;transform:scaleX(0.9800);font-weight:700;color:#1c2b34;">35.4</span>
<span class="t" style="left:2930.96px;top:1388px;font-size:19.8px;transform:scaleX(1.0350);font-weight:700;color:#636d77;">conns/s</span>
<span class="t" style="left:2865.06px;top:1384px;font-size:23.8px;transform:scaleX(0.9800);font-weight:700;color:#1c2b34;">142m</span>
<svg style="position:absolute;left:3042px;top:1378.3px;" width="8" height="30" viewBox="0 0 8 30"><circle cx="4" cy="4.1" r="3.3" fill="#7a828b"/><circle cx="4" cy="15" r="3.3" fill="#7a828b"/><circle cx="4" cy="25.9" r="3.3" fill="#7a828b"/></svg>
<span class="t" style="left:583.60px;top:1444px;font-size:23.8px;transform:scaleX(1.0825);color:#1c2b34;">fraud-prevention</span>
<span class="t" style="left:1129.79px;top:1444px;font-size:23.8px;transform:scaleX(1.0873);color:#1c2b34;">elb</span>
<span class="t" style="left:1890.45px;top:1448px;font-size:19.8px;font-weight:700;color:#636d77;">KB</span>
<span class="t" style="left:1839.16px;top:1444px;font-size:23.8px;transform:scaleX(0.9800);font-weight:700;color:#1c2b34;">47.9</span>
<span class="t" style="left:2140.45px;top:1448px;font-size:19.8px;font-weight:700;color:#636d77;">KB</span>
<span class="t" style="left:2089.10px;top:1444px;font-size:23.8px;transform:scaleX(0.9800);font-weight:700;color:#1c2b34;">38.5</span>
<span class="t" style="left:2448.79px;top:1444px;font-size:23.8px;transform:scaleX(0.9800);font-weight:700;color:#1c2b34;">0</span>
<span class="t" style="left:2672.02px;top:1448px;font-size:19.8px;font-weight:700;color:#636d77;">ms</span>
<span class="t" style="left:2620.64px;top:1444px;font-size:23.8px;transform:scaleX(0.9800);font-weight:700;color:#1c2b34;">81.1</span>
<span class="t" style="left:2930.96px;top:1448px;font-size:19.8px;transform:scaleX(1.0350);font-weight:700;color:#636d77;">conns/s</span>
<span class="t" style="left:2859.05px;top:1444px;font-size:23.8px;transform:scaleX(0.9800);font-weight:700;color:#1c2b34;">50.3m</span>
<svg style="position:absolute;left:3042px;top:1437.15px;" width="8" height="30" viewBox="0 0 8 30"><circle cx="4" cy="4.1" r="3.3" fill="#7a828b"/><circle cx="4" cy="15" r="3.3" fill="#7a828b"/><circle cx="4" cy="25.9" r="3.3" fill="#7a828b"/></svg>
<span class="t" style="left:581.46px;top:1502px;font-size:23.8px;transform:scaleX(1.1209);color:#1c2b34;">N/A</span>
<span class="t" style="left:631.31px;top:1506px;font-size:19.8px;transform:scaleX(1.0981);color:#8b939b;">(Untagged traffic)</span>
<span class="t" style="left:1129.79px;top:1502px;font-size:23.8px;transform:scaleX(1.0873);color:#1c2b34;">elb</span>
<span class="t" style="left:1904.52px;top:1506px;font-size:19.8px;font-weight:700;color:#636d77;">B</span>
<span class="t" style="left:1859.95px;top:1502px;font-size:23.8px;transform:scaleX(0.9800);font-weight:700;color:#1c2b34;">793</span>
<span class="t" style="left:2140.45px;top:1506px;font-size:19.8px;font-weight:700;color:#636d77;">KB</span>
<span class="t" style="left:2089.18px;top:1502px;font-size:23.8px;transform:scaleX(0.9800);font-weight:700;color:#1c2b34;">1.00</span>
<span class="t" style="left:2448.79px;top:1502px;font-size:23.8px;transform:scaleX(0.9800);font-weight:700;color:#1c2b34;">0</span>
<span class="t" style="left:2672.02px;top:1506px;font-size:19.8px;font-weight:700;color:#636d77;">ms</span>
<span class="t" style="left:2620.77px;top:1502px;font-size:23.8px;transform:scaleX(0.9800);font-weight:700;color:#1c2b34;">13.7</span>
<span class="t" style="left:2930.96px;top:1506px;font-size:19.8px;transform:scaleX(1.0350);font-weight:700;color:#636d77;">conns/s</span>
<span class="t" style="left:2872.75px;top:1502px;font-size:23.8px;transform:scaleX(0.9800);font-weight:700;color:#1c2b34;">556µ</span>
<svg style="position:absolute;left:3042px;top:1496px;" width="8" height="30" viewBox="0 0 8 30"><circle cx="4" cy="4.1" r="3.3" fill="#7a828b"/><circle cx="4" cy="15" r="3.3" fill="#7a828b"/><circle cx="4" cy="25.9" r="3.3" fill="#7a828b"/></svg>
</main>
</body></html>
